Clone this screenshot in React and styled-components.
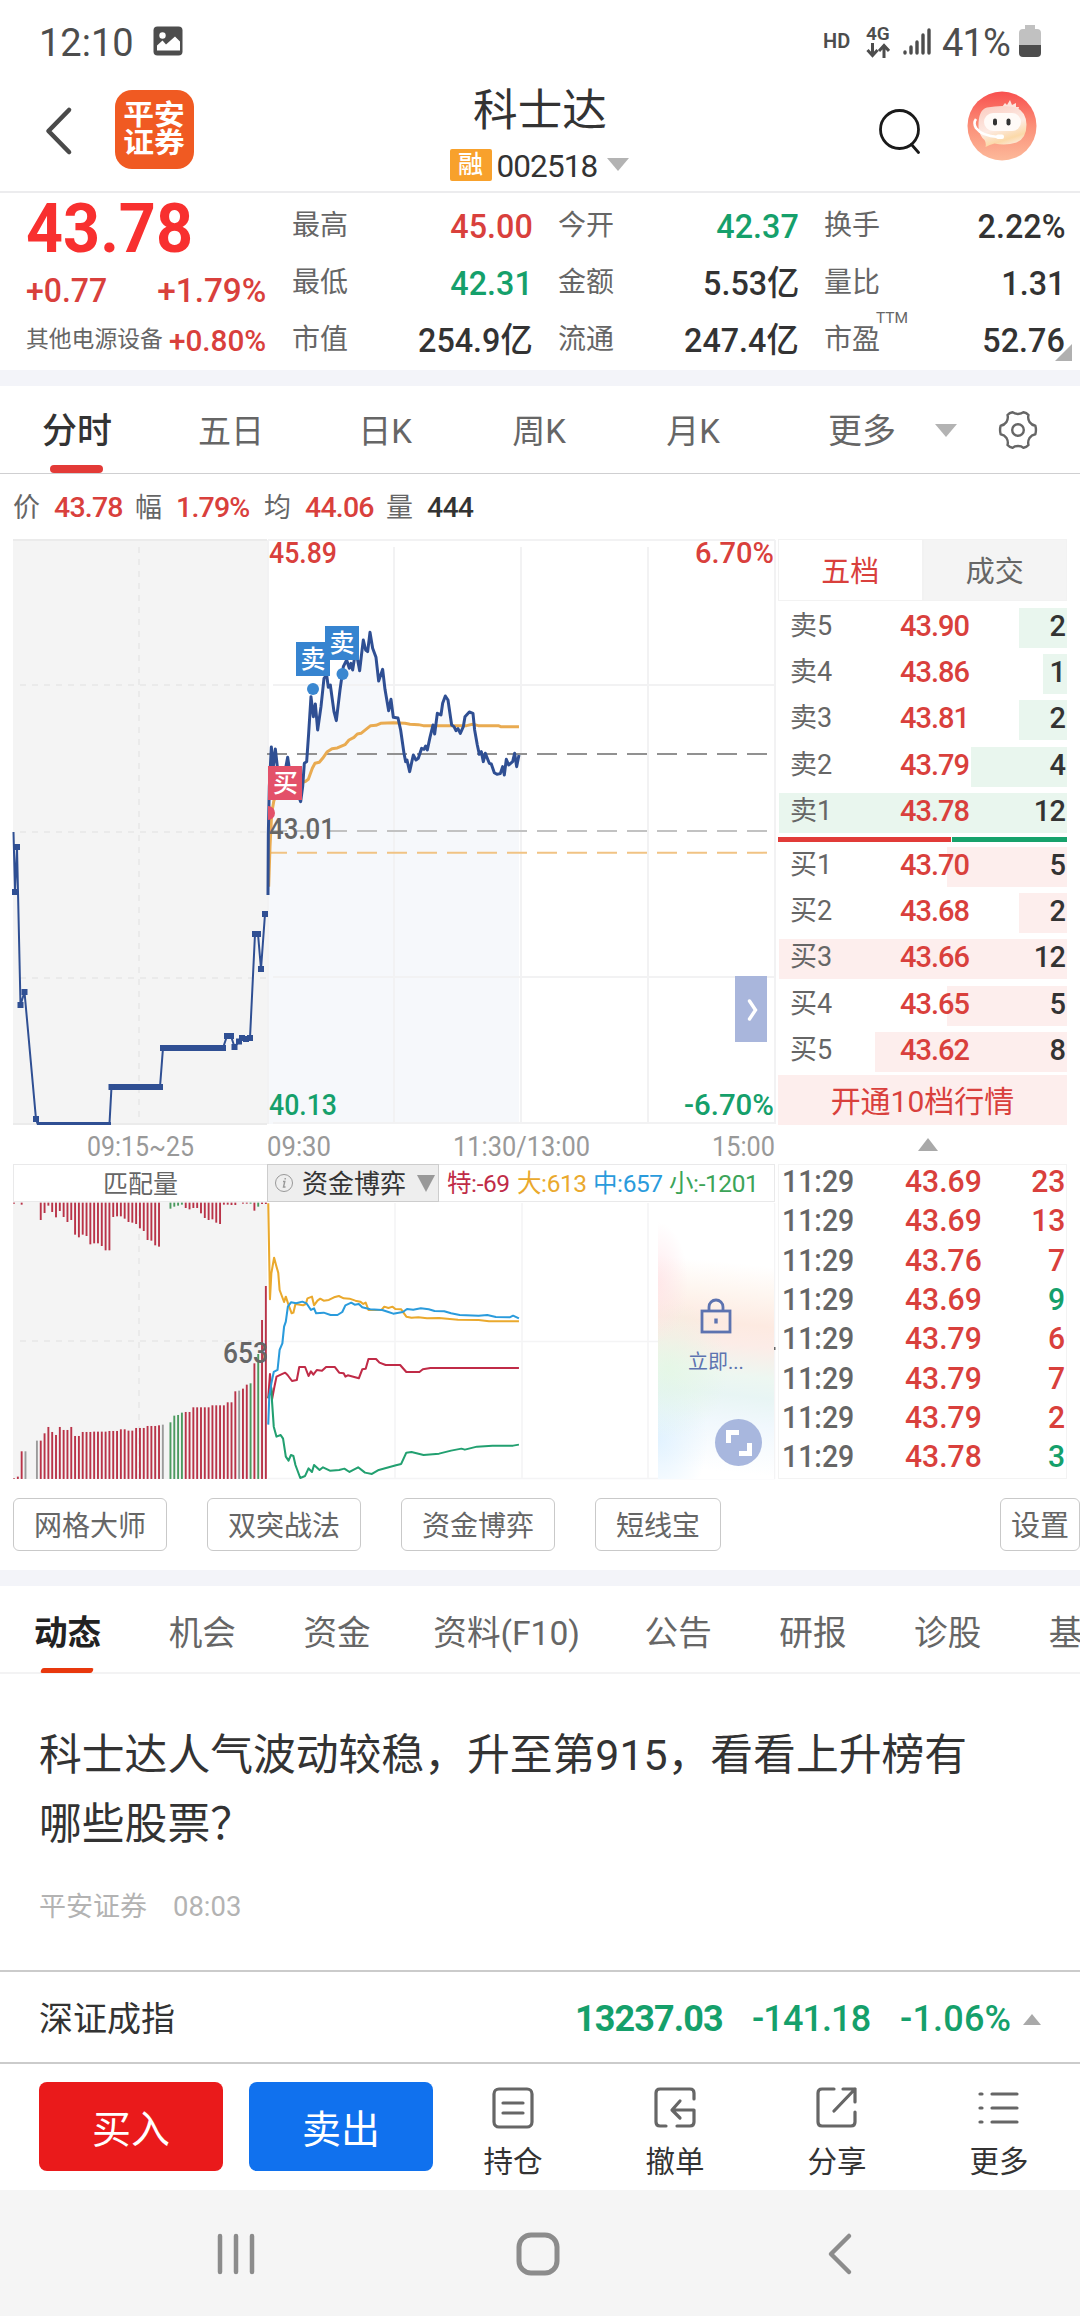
import styled, { createGlobalStyle, css } from "styled-components";

const RED = "#d9403c";
const GREEN = "#15a06b";
const DARK = "#333333";
const GREY = "#666666";

const stats = [
  [
    { label: "最高", value: "45.00", color: RED },
    { label: "今开", value: "42.37", color: GREEN },
    { label: "换手", value: "2.22%" },
  ],
  [
    { label: "最低", value: "42.31", color: GREEN },
    { label: "金额", value: "5.53亿" },
    { label: "量比", value: "1.31" },
  ],
  [
    { label: "市值", value: "254.9亿" },
    { label: "流通", value: "247.4亿" },
    { label: "市盈", value: "52.76", sup: "TTM" },
  ],
];

const periods = ["分时", "五日", "日K", "周K", "月K"];

const sells = [
  ["卖5", "43.90", 2],
  ["卖4", "43.86", 1],
  ["卖3", "43.81", 2],
  ["卖2", "43.79", 4],
  ["卖1", "43.78", 12],
];
const buys = [
  ["买1", "43.70", 5],
  ["买2", "43.68", 2],
  ["买3", "43.66", 12],
  ["买4", "43.65", 5],
  ["买5", "43.62", 8],
];

const trades = [
  ["43.69", 23, RED],
  ["43.69", 13, RED],
  ["43.76", 7, RED],
  ["43.69", 9, GREEN],
  ["43.79", 6, RED],
  ["43.79", 7, RED],
  ["43.79", 2, RED],
  ["43.78", 3, GREEN],
];

const newsTabs = ["动态", "机会", "资金", "资料(F10)", "公告", "研报", "诊股", "基"];

// call auction line: [x, y]
const auction = [
  [13.5, 832], [15, 892], [17, 847], [20.5, 1005], [24.5, 992], [36, 1119], [37.5, 1123.5],
  [109.5, 1123.5], [111.5, 1087], [160, 1087], [163, 1048], [223, 1048], [227, 1036], [231, 1036],
  [234.5, 1047], [239, 1041.5], [242, 1038], [246, 1039], [250, 1038], [255, 934], [258, 934],
  [261, 969], [265, 914],
];
const auctionDots = auction.filter((p, i) => i > 0 && p[1] < 1123);

const priceLine =
  "54,885 55,700 58,560 64,441 70,500 76,447 82,500 90,540 104,520 113,472 120,520 135,560 152,605 158,560 163,490 170,485 176,400 183,290 190,350 196,312 203,390 213,320 222,235 230,225 235,262 241,255 252,335 259,362 270,270 280,200 290,180 298,205 303,190 308,210 315,165 322,175 329,212 335,160 340,120 347,150 353,155 360,97 368,145 378,172 386,243 398,208 405,268 416,332 423,298 430,352 444,354 452,390 462,460 467,485 471,480 479,515 490,465 498,480 505,475 515,445 522,448 527,438 532,450 540,412 549,375 554,402 562,340 573,345 578,310 586,288 594,300 605,375 612,380 618,392 624,386 631,400 640,380 645,350 658,336 669,340 674,390 682,435 688,463 694,455 700,485 706,460 718,490 724,492 733,518 741,523 751,521 758,500 763,525 769,478 776,495 788,485 794,460 800,500 807,465";
const averageLine =
  "56,860 60,740 65,640 72,600 100,570 150,550 165,545 175,538 187,505 195,490 208,487 218,475 232,455 246,446 262,444 285,434 297,420 312,412 322,402 333,400 362,377 378,376 392,370 430,368 465,370 480,373 505,374 520,377 650,377 668,373 685,377 745,377 752,380 807,380";

const flows = [
  {
    color: "#c02b47",
    points:
      "779,745 784,672 790,748 797,710 803,680 828,668 835,675 848,693 862,690 869,651 886,651 896,678 903,664 910,674 920,660 935,662 947,651 972,651 985,668 998,670 1003,680 1010,676 1042,685 1052,658 1062,656 1070,627 1092,627 1102,638 1120,645 1162,645 1180,666 1218,666 1228,658 1250,654 1507,654",
  },
  {
    color: "#22a070",
    points:
      "779,745 788,715 790,755 795,830 803,860 815,855 822,866 830,920 838,932 845,915 852,918 858,945 872,984 886,978 896,955 906,966 912,945 928,960 938,952 958,962 985,960 1000,956 1015,966 1040,952 1060,968 1080,972 1100,960 1150,946 1165,942 1180,908 1195,906 1230,915 1275,911 1310,902 1340,896 1350,899 1385,890 1430,887 1490,887 1507,884",
  },
  {
    color: "#eaa92d",
    points:
      "779,160 784,448 788,370 796,323 803,350 808,368 812,420 825,456 830,440 838,465 847,490 852,488 858,462 880,466 888,462 893,445 906,440 912,466 922,452 930,446 940,452 955,450 970,442 984,438 998,445 1015,446 1032,452 1046,455 1055,462 1062,458 1070,480 1108,480 1116,470 1128,474 1140,470 1148,477 1165,478 1180,500 1195,503 1215,502 1240,505 1275,504 1330,509 1390,510 1420,514 1507,514",
  },
  {
    color: "#2a9bdc",
    points:
      "779,824 782,740 788,700 795,666 806,660 812,600 820,580 825,530 830,515 836,470 845,457 860,460 878,455 890,460 903,480 912,475 918,490 940,488 960,495 980,495 994,486 1003,466 1020,458 1030,464 1042,462 1052,472 1075,478 1110,480 1128,486 1142,491 1170,486 1182,477 1200,479 1222,475 1245,478 1262,483 1290,484 1310,490 1335,495 1390,497 1415,495 1440,501 1480,502 1490,497 1507,505",
  },
];

const matched = [
  985, 980, 904, 904, 0, 0, 872, 872, 850, 831, 846, 855, 831, 840, 840, 831, 858, 858, 846, 846,
  846, 845, 845, 845, 845, 843, 843, 843, 838, 838, 842, 842, 834, 834, 834, 828, 828, 828, 826,
  824, 0, 817, 797, 795, 788, 786, 786, 772, 772, 772, 772, 772, 766, 766, 766, 766, 757, 757, 724,
  722, 716, 704, 700, 640, 612, 510, 408,
];
const unmatched = [
  161, 0, 164, 0, 0, 0, 0, 210, 189, 167, 186, 202, 183, 201, 216, 210, 254, 262, 254, 258, 283,
  280, 280, 288, 301, 301, 201, 199, 199, 206, 216, 218, 222, 235, 243, 270, 272, 286, 290, 0, 0,
  176, 170, 167, 164, 174, 178, 174, 174, 190, 204, 210, 208, 218, 222, 164, 164, 165, 165, 0, 161,
  161, 161, 182, 170, 162, 162,
];
const greyBars = [3, 6, 39, 59];
const greenBars = [41, 42, 43, 44, 62, 64];
const barColor = (i) => {
  if (greyBars.includes(i)) return "#9b9b9b";
  if (greenBars.includes(i)) return "#4b9a5f";
  return "#b93348";
};

const PriceChart = () => (
  <ChartSvg width="778" height="625" viewBox="0 539 778 625">
    <rect x="13" y="539" width="254" height="586" fill="#f4f4f4" />
    <g stroke="#eaeaea" strokeWidth="2" strokeDasharray="6 6">
      <path d="M139 547V1124M20 685H267M20 832H267M20 978H267" />
    </g>
    <polygon
      points={`${priceLine} 807,1572 54,1572`}
      transform="translate(250 600) scale(.3333)"
      fill="#f6f8fb"
    />
    <g stroke="#f2f2f3" strokeWidth="2" fill="none">
      <path d="M268 540H775M273 685H775M273 977H775M273 1123H775" />
      <path d="M268 540V1124M394 547V1124M521 547V1124M648 547V1124M775 540V1124" />
      <path d="M13 1124H267M13 540H267" stroke="#ebebeb" />
    </g>
    <g strokeWidth="2" strokeDasharray="20 10">
      <path d="M267 754H768" stroke="#919191" />
      <path d="M267 831H768" stroke="#c2c2c2" />
      <path d="M267 852.7H768" stroke="#f1c384" />
    </g>

    <polyline points={auction.join(" ")} fill="none" stroke="#2f4f93" strokeWidth="2" />
    <path d="M37 1123.5H111" stroke="#2f4f93" strokeWidth="3" />
    <path d="M109 1087H162M161 1048H226" stroke="#2f4f93" strokeWidth="6" />
    {auctionDots.map(([x, y], i) => (
      <rect key={i} x={x - 3} y={y - 3} width="6" height="6" fill="#2f4f93" />
    ))}

    <g transform="translate(250 600) scale(.3333)" fill="none" strokeLinejoin="round">
      <polyline points={averageLine} stroke="#e9ab51" strokeWidth="9" />
      <polyline points={priceLine} stroke="#2f4f93" strokeWidth="9" />
    </g>

    <path d="M268 806a7 7 0 0 1 0 14z" fill="#e35169" />
    <circle cx="313" cy="689" r="6" fill="#3a87d0" />
    <circle cx="342.5" cy="674" r="6" fill="#3a87d0" />
    <rect x="296" y="642" width="34" height="34" fill="#3684d0" />
    <rect x="325" y="626" width="34" height="34" fill="#3684d0" />
    <rect x="268" y="766" width="34" height="34" fill="#e35169" />
    <g fill="#fff" fontSize="25" fontWeight="500" textAnchor="middle">
      <text x="313" y="668">卖</text>
      <text x="342" y="652">卖</text>
      <text x="285.5" y="792">买</text>
    </g>

    <g fontSize="29" fontWeight="500">
      <text x="269" y="563" fill={RED} textLength="68" lengthAdjust="spacingAndGlyphs">45.89</text>
      <text x="695" y="563" fill={RED} textLength="79" lengthAdjust="spacingAndGlyphs">6.70%</text>
      <text x="269" y="839" fill={GREY} textLength="66" lengthAdjust="spacingAndGlyphs">43.01</text>
      <text x="269" y="1115" fill={GREEN} textLength="68" lengthAdjust="spacingAndGlyphs">40.13</text>
      <text x="684" y="1115" fill={GREEN} textLength="90" lengthAdjust="spacingAndGlyphs">-6.70%</text>
    </g>
    <g fontSize="27" fill="#999">
      <text x="87" y="1156" textLength="107" lengthAdjust="spacingAndGlyphs">09:15~25</text>
      <text x="267" y="1156" textLength="64" lengthAdjust="spacingAndGlyphs">09:30</text>
      <text x="453" y="1156" textLength="137" lengthAdjust="spacingAndGlyphs">11:30/13:00</text>
      <text x="712" y="1156" textLength="63" lengthAdjust="spacingAndGlyphs">15:00</text>
    </g>

    <rect x="735" y="976" width="32" height="66" fill="#a9b6dc" />
    <path d="M749.5 1001l6 9-6 9" fill="none" stroke="#fff" strokeWidth="3.4" strokeLinecap="round" />
  </ChartSvg>
);

const FlowChart = () => (
  <ChartSvg width="778" height="277" viewBox="0 1202 778 277">
    <rect x="13" y="1202" width="254" height="277" fill="#f4f4f4" />
    <path d="M139 1210V1479M20 1341H267" stroke="#eaeaea" strokeWidth="2" strokeDasharray="6 6" />
    <path
      d="M395 1203V1479M522 1203V1479M648 1203V1479M268 1341.5H775M268 1478.5H775M774.5 1203V1479"
      stroke="#f4f4f5"
      strokeWidth="1.5"
    />
    <rect x="773.5" y="1347" width="2" height="3" fill={GREY} />
    <g transform="translate(0 1150) scale(.34435 .3333)">
      {matched.map((top, i) =>
        top ? (
          <rect key={i} x={38 + i * 11.08} y={top} width="5.5" height={987 - top} fill={barColor(i)} />
        ) : null
      )}
      {unmatched.map((end, i) =>
        end ? (
          <rect key={i} x={38 + i * 11.08} y="158" width="5.5" height={end - 158} fill={barColor(i)} />
        ) : null
      )}
    </g>
    <text x="223" y="1362.5" fontSize="30" fontWeight="500" fill={GREY} textLength="45" lengthAdjust="spacingAndGlyphs">
      653
    </text>
    <g transform="translate(0 1150) scale(.34435 .3333)" fill="none" strokeWidth="6" strokeLinejoin="round">
      {flows.map((f) => (
        <polyline key={f.color} points={f.points} stroke={f.color} />
      ))}
    </g>
  </ChartSvg>
);

const Book = ({ rows, side }) =>
  rows.map(([name, price, lots]) => (
    <BookRow key={name}>
      <Depth $side={side} style={{ width: Math.min(lots * 24, 288) }} />
      <BookName>{name}</BookName>
      <BookPrice>{price}</BookPrice>
      <BookLots>{lots}</BookLots>
    </BookRow>
  ));

const App = () => {
  return (
    <Page>
      <GlobalStyle />
      <StatusBar>
        <Clock>12:10</Clock>
        <svg width="30" height="30" viewBox="0 0 30 30">
          <rect x="0.5" y="0.5" width="29" height="29" rx="4" fill="#4d4d4d" />
          <circle cx="9.5" cy="9.5" r="3.2" fill="#fff" />
          <path d="M4 24.5v-5l5.5-5 3.5 4 9-8 5 5v9z" fill="#fff" strokeLinejoin="round" />
        </svg>
        <StatusRight>
          <Hd>HD</Hd>
          <Network>
            4G
            <svg width="24" height="15" viewBox="0 0 24 15" fill="none" stroke="#4d4d4d" strokeWidth="3">
              <path d="M6.5 0v12M1.5 7l5 5.500 5-5.500M18 15V3M13 8l5-5.500 5 5.500" />
            </svg>
          </Network>
          <svg width="28" height="28" viewBox="0 0 28 28" stroke="#4d4d4d" strokeWidth="3.4" strokeLinecap="round">
            <path d="M2 26v-1M8 26v-6M14 26V15M20 26V8M26 26V3" />
          </svg>
          <Battery>41%</Battery>
          <svg width="22" height="34" viewBox="0 0 22 34">
            <path d="M6 1h10v4h2q4 0 4 4v12H0V9q0-4 4-4h2z" fill="#c1c1c1" />
            <path d="M0 21h22v8q0 4-4 4H4q-4 0-4-4z" fill="#4d4d4d" />
          </svg>
        </StatusRight>
      </StatusBar>

      <Header>
        <HeaderSide>
          <svg width="28" height="50" viewBox="0 0 28 50" fill="none" stroke="#4a4a4a" strokeWidth="4.6" strokeLinecap="round" strokeLinejoin="round">
            <path d="M24 4L3.500 25 24 46" />
          </svg>
          <Brand>
            <span>平安</span>
            <span>证券</span>
          </Brand>
        </HeaderSide>
        <Title>
          <StockName>科士达</StockName>
          <StockCode>
            <Tag>融</Tag>
            <Code>002518</Code>
            <Caret />
          </StockCode>
        </Title>
        <HeaderSide $end>
          <svg width="42" height="46" viewBox="0 0 42 46" fill="none" stroke="#1a1a1a" strokeWidth="2.8">
            <circle cx="20.500" cy="21.500" r="19" />
            <path d="M32.500 36.500l7 8" strokeLinecap="round" />
          </svg>
          <svg width="70" height="70" viewBox="0 0 70 70">
            <defs>
              <linearGradient id="face" x1="0" y1="0" x2="0" y2="1">
                <stop offset="0" stopColor="#f8504f" />
                <stop offset="0.5" stopColor="#fb8f78" />
                <stop offset="1" stopColor="#fcb99a" />
              </linearGradient>
              <linearGradient id="bubble" x1="0.3" y1="0" x2="0.7" y2="1">
                <stop offset="0" stopColor="#fbd0c6" />
                <stop offset="0.5" stopColor="#fdebe4" />
                <stop offset="0.8" stopColor="#fbd9a8" />
                <stop offset="1" stopColor="#fdeee6" />
              </linearGradient>
            </defs>
            <circle cx="35" cy="35" r="34.500" fill="url(#face)" />
            <path d="M35 16l3-4 2 2 3-5 2 5 4-2 0 4 3 0-1 4z" fill="#fde3dc" />
            <path d="M20 16.500q16-3 29 0 10 4 10.500 17 0 14-10 18-11 3.500-22 1-5 1-9 3.500 1-4-1-7-5-4-6-13Q11 19 20 16.500z" fill="url(#bubble)" />
            <rect x="17" y="22" width="37" height="18" rx="9" fill="#fffaf7" />
            <path d="M9 28q-3 4 0 9 6 8 22 9" fill="none" stroke="#fff" strokeWidth="2.6" />
            <rect x="29" y="43.500" width="8" height="4.500" rx="2" fill="#fff" />
            <rect x="26" y="27.500" width="4" height="7" rx="2" fill="#333" />
            <rect x="39.500" y="27.500" width="4" height="7" rx="2" fill="#333" />
          </svg>
        </HeaderSide>
      </Header>

      <Quote>
        <QuoteMain>
          <BigPrice>43.78</BigPrice>
          <Change>
            <Num $c={RED} $size={34} $origin="left">+0.77</Num>
            <Num $c={RED} $size={34} $x={0.98} $origin="right">+1.79%</Num>
          </Change>
          <Sector>
            <span>其他电源设备</span>
            <Num $c={RED} $size={30} $x={0.99} $origin="right">+0.80%</Num>
          </Sector>
        </QuoteMain>
        <StatGrid>
          {stats.flat().map((s) => (
            <Stat key={s.label}>
              <StatLabel>
                {s.label}
                {s.sup && <sup>{s.sup}</sup>}
              </StatLabel>
              <Num $c={s.color || DARK} $size={34} $x={0.95} $origin="right">{s.value}</Num>
            </Stat>
          ))}
        </StatGrid>
        <Corner />
      </Quote>
      <Band />

      <PeriodTabs>
        {periods.map((p, i) => (
          <Period key={p} $active={i === 0}>{p}</Period>
        ))}
        <MorePeriods>
          更多
          <Caret />
        </MorePeriods>
        <svg width="40" height="40" viewBox="0 0 40 40" fill="none" stroke="#666" strokeWidth="2.4" strokeLinejoin="round">
          <path d="M20 4Q23.500 4 25.500 2.200Q28.500 2.700 30.500 5Q29.500 8.500 31.500 12Q33.500 15 37.300 15.700Q38.600 20 37.300 24.300Q33.500 25 31.500 28Q29.500 31.500 30.500 35Q28.500 37.300 25.500 37.800Q23.500 36 20 36Q16.500 36 14.500 37.800Q11.500 37.300 9.500 35Q10.500 31.500 8.500 28Q6.500 25 2.700 24.300Q1.400 20 2.700 15.700Q6.500 15 8.500 12Q10.500 8.500 9.500 5Q11.500 2.700 14.500 2.200Q16.500 4 20 4Z" />
          <circle cx="20" cy="20" r="5.800" />
        </svg>
      </PeriodTabs>

      <Summary>
        <span>价</span><SummaryNum $w={66}>43.78</SummaryNum>
        <span>幅</span><SummaryNum $w={73}>1.79%</SummaryNum>
        <span>均</span><SummaryNum $w={66}>44.06</SummaryNum>
        <span>量</span><SummaryNum $w={45} $dark>444</SummaryNum>
      </Summary>

      <Market>
        <Charts>
          <PriceChart />
          <FlowHeader>
            <MatchTitle>匹配量</MatchTitle>
            <FlowSelect>
              <svg width="20" height="20" viewBox="0 0 20 20" fill="none" stroke="#999">
                <circle cx="10" cy="10" r="8.500" />
                <path d="M9 8.500h1.800L9.500 14h2M11.200 5v1.500" strokeWidth="1.4" />
              </svg>
              <span>资金博弈</span>
              <BigCaret />
            </FlowSelect>
            <FlowLegend>
              <FlowItem $c="#c02b47" $w={63}>特:-69</FlowItem>
              <FlowItem $c="#eaa92d" $w={69}>大:613</FlowItem>
              <FlowItem $c="#2a9bdc" $w={69}>中:657</FlowItem>
              <FlowItem $c="#3ca458" $w={90}>小:-1201</FlowItem>
            </FlowLegend>
          </FlowHeader>
          <FlowArea>
            <FlowChart />
            <Locked>
              <svg width="32" height="36" viewBox="0 0 32 36" fill="none" stroke="#5d73b0" strokeWidth="2.8">
                <rect x="2" y="13" width="28" height="21" />
                <path d="M9 13V9a7 7 0 0 1 14 0v4" />
                <path d="M16 20.500v5" strokeWidth="3.4" />
              </svg>
              <span>立即...</span>
              <Expand>
                <svg width="28" height="28" viewBox="0 0 28 28" fill="none" stroke="#fff" strokeWidth="5">
                  <path d="M3.500 14V3.500H14M24.500 14v10.500H14" />
                </svg>
              </Expand>
            </Locked>
          </FlowArea>
        </Charts>

        <SidePanel>
          <BookTabs>
            <BookTab $active>五档</BookTab>
            <BookTab>成交</BookTab>
          </BookTabs>
          <Book rows={sells} side="sell" />
          <Ratio />
          <Book rows={buys} side="buy" />
          <OpenLevels>开通10档行情</OpenLevels>
          <Collapse><UpCaret /></Collapse>
          <Trades>
            {trades.map(([price, lots, color], i) => (
              <Trade key={i}>
                <Num $c={GREY} $size={32} $x={0.89} $origin="left">11:29</Num>
                <Num $c={RED} $size={32} $origin="left">{price}</Num>
                <Num $c={color} $size={32} $origin="right">{lots}</Num>
              </Trade>
            ))}
          </Trades>
        </SidePanel>
      </Market>

      <Tools>
        <Tool>网格大师</Tool>
        <Tool>双突战法</Tool>
        <Tool>资金博弈</Tool>
        <Tool>短线宝</Tool>
        <Setting>设置</Setting>
      </Tools>
      <Band />

      <NewsTabs>
        {newsTabs.map((t, i) => (
          <NewsTab key={t} $active={i === 0} $wide={t.length > 2}>{t}</NewsTab>
        ))}
      </NewsTabs>

      <News>
        <NewsTitle>科士达人气波动较稳，升至第915，看看上升榜有哪些股票？</NewsTitle>
        <NewsMeta>
          <span>平安证券</span>
          <Num $c="#b3b3b3" $size={28} $w={400} $x={0.98} $origin="left">08:03</Num>
        </NewsMeta>
      </News>

      <IndexBar>
        <IndexName>深证成指</IndexName>
        <IndexNum $w={147} $bold>13237.03</IndexNum>
        <IndexNum $w={118}>-141.18</IndexNum>
        <IndexNum $w={110} $last>-1.06%</IndexNum>
        <UpCaret $small />
      </IndexBar>

      <Actions>
        <TradeButton $bg="#ea1a1b">买入</TradeButton>
        <TradeButton $bg="#1071ee">卖出</TradeButton>
        <Action>
          <ActionIcon>
            <rect x="2" y="2" width="38" height="38" rx="5" />
            <path d="M11 16h20M11 26h20" />
          </ActionIcon>
          持仓
        </Action>
        <Action>
          <ActionIcon>
            <path d="M40 12V6q0-4-4-4H6Q2 2 2 6v29q0 4 4 4h6M23 39h13q4 0 4-4V23H19M26 14l-8 9 8 8" />
          </ActionIcon>
          撤单
        </Action>
        <Action>
          <ActionIcon>
            <path d="M18 2H6Q2 2 2 6v29q0 4 4 4h29q4 0 4-4V25M27 2h12v13M39 2L18 24" />
          </ActionIcon>
          分享
        </Action>
        <Action>
          <ActionIcon>
            <path d="M2 7h2M2 21h2M2 35h2M14 7h25M14 21h25M14 35h25" />
          </ActionIcon>
          更多
        </Action>
      </Actions>

      <NavBar>
        <svg width="38" height="42" viewBox="0 0 38 42" stroke="#8c8c8c" strokeWidth="4.500" strokeLinecap="round">
          <path d="M3 3v36M19 3v36M35 3v36" />
        </svg>
        <HomeIcon width="44" height="44" viewBox="0 0 44 44" fill="none" stroke="#8c8c8c" strokeWidth="5">
          <rect x="3" y="3" width="38" height="38" rx="12" />
        </HomeIcon>
        <svg width="26" height="44" viewBox="0 0 26 44" fill="none" stroke="#8c8c8c" strokeWidth="4.500" strokeLinecap="round" strokeLinejoin="round">
          <path d="M22 4L4 22l18 18" />
        </svg>
      </NavBar>
    </Page>
  );
};
export default App;

const GlobalStyle = createGlobalStyle`
  * {
    box-sizing: border-box;
  }
  body {
    margin: 0;
    background: #fff;
  }
  svg {
    display: block;
    flex: none;
  }
`;

const Page = styled.div`
  width: 1080px;
  height: 2316px;
  display: flex;
  flex-direction: column;
  overflow: hidden;
  background: #fff;
  color: ${DARK};
  font-family: Roboto, "Noto Sans CJK SC", sans-serif;
  line-height: 1;
  white-space: nowrap;
`;

// digits are set a little narrower than the font's own
const Num = styled.span`
  display: inline-block;
  color: ${(p) => p.$c};
  font-size: ${(p) => p.$size}px;
  font-weight: ${(p) => p.$w || 500};
  transform: scaleX(${(p) => p.$x || 0.94});
  transform-origin: ${(p) => p.$origin} center;
`;

const StatusBar = styled.div`
  height: 84px;
  display: flex;
  align-items: center;
  padding: 0 39px 3px 39px;
  color: #4d4d4d;
`;
const Clock = styled.span`
  width: 114px;
  font-size: 38px;
  padding-top: 4px;
`;
const StatusRight = styled.div`
  display: flex;
  align-items: center;
  margin-left: auto;
`;
const Hd = styled.span`
  width: 43px;
  font-size: 20px;
  font-weight: 600;
`;
const Network = styled.div`
  width: 37px;
  font-size: 19px;
  font-weight: 600;
`;
const Battery = styled.span`
  width: 88px;
  padding: 4px 0 0 11px;
  font-size: 38px;
  letter-spacing: -0.8px;
`;

const Header = styled.div`
  height: 109px;
  display: grid;
  grid-template-columns: 1fr auto 1fr;
  border-bottom: 2px solid #ececee;
`;
const HeaderSide = styled.div`
  display: flex;
  align-items: flex-start;
  ${(p) =>
    p.$end
      ? css`
          justify-content: flex-end;
          gap: 46px;
          padding: 7px 43px 0 0;
          svg:first-child {
            margin-top: 17px;
          }
        `
      : css`
          gap: 42px;
          padding: 6px 0 0 45px;
          svg {
            margin-top: 16px;
          }
        `}
`;
const Brand = styled.div`
  width: 79px;
  height: 79px;
  display: flex;
  flex-direction: column;
  align-items: center;
  justify-content: center;
  border-radius: 17px;
  background: #f05a22;
  color: #fff;
  font-size: 28px;
  font-weight: 700;
  line-height: 28px;
  span {
    transform: scaleX(1.1);
  }
`;
const Title = styled.div`
  display: flex;
  flex-direction: column;
  align-items: center;
`;
const StockName = styled.div`
  font-size: 44.6px;
  line-height: 50px;
  margin-top: 2px;
`;
const StockCode = styled.div`
  display: flex;
  align-items: center;
  margin: 11px 2px 0 0;
`;
const Tag = styled.span`
  width: 42px;
  height: 32px;
  border-radius: 2px;
  background: #f8a12c;
  color: #fff;
  font-size: 25px;
  line-height: 31px;
  text-align: center;
  font-weight: 500;
`;
const Code = styled.span`
  width: 115px;
  padding: 4px 0 0 5px;
  font-size: 31.5px;
  letter-spacing: -0.9px;
`;
const Caret = styled.i`
  border: 11px solid transparent;
  border-top: 13px solid #b3b3b3;
  border-bottom: 0;
`;
const BigCaret = styled(Caret)`
  border-width: 17px 9.5px 0;
  border-top-color: #999;
  margin-left: auto;
`;
const UpCaret = styled.i`
  border: ${(p) => (p.$small ? 9 : 10)}px solid transparent;
  border-bottom: ${(p) => (p.$small ? 11 : 13)}px solid #a9a9a9;
  border-top: 0;
`;

const Quote = styled.div`
  height: 177px;
  display: flex;
  padding: 0 15px 0 26px;
  position: relative;
`;
const QuoteMain = styled.div`
  width: 240px;
  margin-right: 26px;
`;
const BigPrice = styled.div`
  height: 77px;
  padding-top: 2px;
  font-size: 68px;
  font-weight: 700;
  color: #f8302f;
  transform: scaleX(0.95);
  transform-origin: left;
`;
const Change = styled.div`
  display: flex;
  justify-content: space-between;
  padding-top: 3px;
  height: 42px;
`;
const Sector = styled.div`
  height: 57px;
  display: flex;
  justify-content: space-between;
  align-items: center;
  font-size: 22.8px;
  color: ${GREY};
  ${Num} {
    margin-left: -10px;
  }
`;
const StatGrid = styled.div`
  flex: 1;
  display: grid;
  grid-template-columns: repeat(3, 241px);
  grid-auto-rows: 57px;
  column-gap: 25px;
  padding-top: 4px;
`;
const Stat = styled.div`
  display: flex;
  align-items: center;
  justify-content: space-between;
`;
const StatLabel = styled.span`
  position: relative;
  padding-top: 1px;
  font-size: 28px;
  color: ${GREY};
  sup {
    position: absolute;
    left: 52px;
    top: -14px;
    font-size: 15.5px;
    line-height: 1;
  }
`;
const Corner = styled.i`
  position: absolute;
  right: 8px;
  bottom: 9px;
  border-left: 17px solid transparent;
  border-bottom: 17px solid #b0b0b0;
`;

const Band = styled.div`
  height: 16px;
  background: #f3f4f9;
`;

const PeriodTabs = styled.div`
  height: 88px;
  display: flex;
  align-items: center;
  border-bottom: 1px solid #cfcfd1;
`;
const Period = styled.div`
  width: 154px;
  height: 87px;
  line-height: 91px;
  text-align: center;
  font-size: ${(p) => (p.$active ? 35 : 33)}px;
  font-weight: ${(p) => (p.$active ? 500 : 400)};
  color: ${(p) => (p.$active ? DARK : GREY)};
  ${(p) =>
    p.$active &&
    css`
      &::after {
        content: "";
        display: block;
        width: 53px;
        height: 8px;
        margin: -12px 0 0 50px;
        border-radius: 4px;
        background: #e33a37;
      }
    `}
`;
const MorePeriods = styled.div`
  width: 169px;
  margin-left: 58px;
  padding-top: 2px;
  display: flex;
  align-items: center;
  gap: 39px;
  font-size: 34px;
  color: ${GREY};
  & + svg {
    margin-left: 1px;
  }
`;

const Summary = styled.div`
  height: 65px;
  display: flex;
  align-items: center;
  gap: 15px;
  padding: 4px 0 0 13px;
  font-size: 27px;
  color: ${GREY};
`;
const SummaryNum = styled.b`
  width: ${(p) => p.$w}px;
  margin-left: -1px;
  font-size: 28.5px;
  font-weight: 500;
  letter-spacing: -0.8px;
  color: ${(p) => (p.$dark ? DARK : RED)};
`;

const Market = styled.div`
  height: 940px;
  display: flex;
`;
const Charts = styled.div`
  width: 778px;
`;
const ChartSvg = styled.svg`
  overflow: visible;
  font-family: Roboto, "Noto Sans CJK SC", sans-serif;
`;
const FlowHeader = styled.div`
  height: 38px;
  width: 762px;
  margin-left: 13px;
  display: flex;
  border: 1px solid #e9e9ea;
`;
const MatchTitle = styled.div`
  width: 253px;
  line-height: 39px;
  text-align: center;
  font-size: 25px;
  color: ${GREY};
`;
const FlowSelect = styled.div`
  width: 172px;
  height: 38px;
  margin-top: -1px;
  padding: 0 3px 0 6px;
  display: flex;
  align-items: center;
  gap: 8px;
  font-size: 26px;
  background: #eeeeee;
  border: 1px solid #cdcdcd;
  span {
    padding-top: 2px;
  }
`;
const FlowLegend = styled.div`
  display: flex;
  align-items: center;
  gap: 7px;
  padding: 2px 0 0 8px;
`;
const FlowItem = styled.span`
  width: ${(p) => p.$w}px;
  font-size: 24.5px;
  letter-spacing: -0.4px;
  color: ${(p) => p.$c};
`;
const FlowArea = styled.div`
  position: relative;
`;
const Locked = styled.div`
  position: absolute;
  left: 658px;
  top: 2px;
  width: 116px;
  height: 275px;
  padding-top: 94px;
  display: flex;
  flex-direction: column;
  align-items: center;
  gap: 18px;
  font-size: 20px;
  color: #5d73b0;
  background: radial-gradient(30px 60px at 0 78px, rgba(255, 225, 230, 0.7), transparent),
    radial-gradient(60px 70px at 10px 165px, rgba(226, 247, 226, 0.7), transparent),
    radial-gradient(50px 70px at 0 235px, rgba(220, 240, 255, 0.8), transparent),
    linear-gradient(186deg, #fff 22%, #fef6f0 32%, #fdeae1 43%, #fcece7 50%, #edf7f1 61%, #e8f5f4 68%, #f1f8fd 78%, #fff 95%);
`;
const Expand = styled.div`
  position: absolute;
  left: 57px;
  top: 215px;
  width: 47px;
  height: 47px;
  display: grid;
  place-items: center;
  border-radius: 50%;
  background: #a8b7de;
`;

const SidePanel = styled.div`
  width: 289px;
`;
const BookTabs = styled.div`
  height: 62px;
  display: flex;
  margin-bottom: 4px;
`;
const BookTab = styled.div`
  flex: 1;
  line-height: 65px;
  text-align: center;
  font-size: 29px;
  color: ${(p) => (p.$active ? RED : GREY)};
  background: ${(p) => (p.$active ? "#fff" : "#f4f4f4")};
  border: 1px solid #f2f2f2;
`;
const BookRow = styled.div`
  position: relative;
  height: 46.2px;
  display: flex;
  align-items: center;
  padding: 0 2px 3px 12px;
`;
const Depth = styled.div`
  position: absolute;
  right: 0;
  top: 3px;
  height: 40px;
  background: ${(p) => (p.$side === "sell" ? "#e9f6ee" : "#fdeeed")};
`;
const BookName = styled.span`
  position: relative;
  width: 110px;
  font-size: 27px;
  color: ${GREY};
`;
const BookPrice = styled.span`
  position: relative;
  font-size: 29px;
  font-weight: 500;
  letter-spacing: -1px;
  color: ${RED};
`;
const BookLots = styled.span`
  position: relative;
  margin-left: auto;
  font-size: 29px;
  font-weight: 500;
  letter-spacing: -0.9px;
`;
const Ratio = styled.div`
  height: 5px;
  margin: 1px 0 2px;
  background: linear-gradient(90deg, #e13b38 173px, #fff 173px 174px, #17a26c 174px);
`;
const OpenLevels = styled.div`
  height: 50px;
  line-height: 54px;
  text-align: center;
  font-size: 30px;
  color: ${RED};
  background: #fdeeed;
`;
const Collapse = styled.div`
  height: 39px;
  display: flex;
  align-items: center;
  justify-content: center;
  padding-left: 11px;
`;
const Trades = styled.div`
  height: 315px;
  border: 1px solid #f3f3f3;
`;
const Trade = styled.div`
  height: 39.3px;
  display: grid;
  grid-template-columns: 123px 1fr auto;
  align-items: center;
  padding: 0 1px 7px 3px;
`;

const Tools = styled.div`
  height: 91px;
  padding: 19px 0 0 13px;
  display: flex;
  gap: 40px;
`;
const Tool = styled.div`
  height: 53px;
  line-height: 55px;
  padding: 0 20px;
  font-size: 28px;
  border: 1px solid #c9c9c9;
  border-radius: 6px;
  color: ${GREY};
`;
const Setting = styled(Tool)`
  margin-left: auto;
  padding: 0 10px;
  font-size: 29px;
`;

const NewsTabs = styled.div`
  height: 88px;
  display: flex;
  gap: 67.6px;
  padding-left: 34px;
  border-bottom: 2px solid #f3f3f4;
`;
const NewsTab = styled.div`
  line-height: 95px;
  margin: ${(p) => (p.$wide ? "0 -3px -2px -5px" : "0 0 -2px")};
  font-size: 33.6px;
  color: ${(p) => (p.$active ? "#222" : GREY)};
  font-weight: ${(p) => (p.$active ? 700 : 400)};
  &::after {
    content: "";
    display: ${(p) => (p.$active ? "block" : "none")};
    width: 52px;
    height: 5px;
    margin: -13px 0 0 7px;
    border-radius: 2px;
    transform: skewX(-20deg);
    background: #e8380d;
  }
`;

const News = styled.div`
  height: 296px;
  padding: 47px 100px 0 39px;
`;
const NewsTitle = styled.div`
  font-size: 42.8px;
  line-height: 69px;
  white-space: normal;
`;
const NewsMeta = styled.div`
  display: flex;
  align-items: center;
  gap: 26px;
  margin-top: 34px;
  font-size: 27px;
  color: #b3b3b3;
`;

const IndexBar = styled.div`
  height: 94px;
  display: flex;
  align-items: center;
  padding: 4px 39px 0 39px;
  border-top: 2px solid #cbcbcb;
  border-bottom: 2px solid #cbcbcb;
`;
const IndexName = styled.span`
  font-size: 34px;
  margin-right: auto;
`;
const IndexNum = styled.span`
  width: ${(p) => p.$w}px;
  margin-right: ${(p) => (p.$last ? 13 : 30)}px;
  font-size: 36px;
  font-weight: ${(p) => (p.$bold ? 700 : 500)};
  letter-spacing: ${(p) => (p.$last ? 0.2 : -0.9)}px;
  color: ${GREEN};
`;

const Actions = styled.div`
  height: 126px;
  display: flex;
  padding: 18px 0 0 39px;
`;
const TradeButton = styled.div`
  flex: none;
  width: 184px;
  height: 89px;
  margin-right: 26px;
  line-height: 96px;
  text-align: center;
  border-radius: 8px;
  color: #fff;
  font-size: 39px;
  background: ${(p) => p.$bg};
`;
const Action = styled.div`
  flex: none;
  width: 162px;
  margin-left: -27px;
  margin-right: 27px;
  display: flex;
  flex-direction: column;
  align-items: center;
  gap: 19px;
  padding-top: 5px;
  font-size: 29.5px;
`;
const ActionIcon = styled.svg.attrs({ viewBox: "0 0 42 42", width: 42, height: 42 })`
  fill: none;
  stroke: #666;
  stroke-width: 3.2;
  stroke-linecap: round;
  stroke-linejoin: round;
`;

const NavBar = styled.div`
  flex: 1;
  display: flex;
  align-items: center;
  justify-content: space-between;
  padding: 2px 227px 0 217px;
  background: #f5f5f5;
`;
const HomeIcon = styled.svg`
  margin-right: 6px;
`;
